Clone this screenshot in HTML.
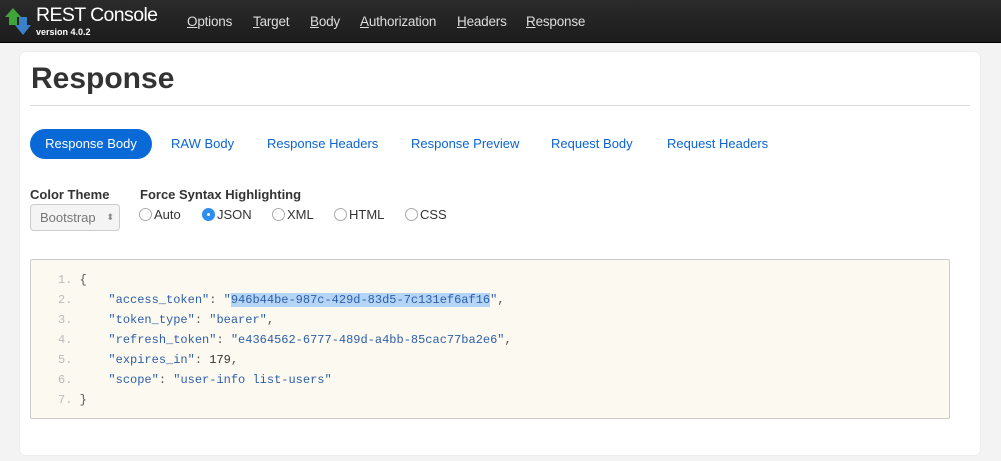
<!DOCTYPE html>
<html><head><style>
*{margin:0;padding:0;box-sizing:border-box}
body{width:1001px;height:461px;background:#f3f3f3;font-family:"Liberation Sans",sans-serif;position:relative;overflow:hidden}
.nav{position:absolute;left:0;top:0;width:1001px;height:43px;background:linear-gradient(#2b2b2b,#1c1c1c);border-bottom:1px solid #000}
.brand{position:absolute;left:36px;top:4px;color:#fff;font-size:19.5px;letter-spacing:-0.6px}
.ver{position:absolute;left:36px;top:27px;color:#fff;font-size:9px;font-weight:bold}
.nav a{position:absolute;top:14px;color:#ddd;font-size:13.5px;text-decoration:none;letter-spacing:-0.2px}
.nav a u{text-decoration:underline}
.card{position:absolute;left:20px;top:52px;width:960px;height:403px;background:#fff;border-radius:6px;box-shadow:0 0 2px rgba(0,0,0,.08)}
h1{position:absolute;left:31px;top:62px;font-size:30px;color:#333;font-weight:bold}
.hr{position:absolute;left:30px;top:105px;width:940px;height:1px;background:#ddd}
.tab{position:absolute;top:136px;font-size:13px;color:#0a64d6}
.pill{position:absolute;left:30px;top:129px;width:122px;height:30px;background:#0969d6;border-radius:15px;color:#fff;font-size:13px;text-align:center;line-height:30px}
.lbl{position:absolute;font-size:13px;font-weight:bold;color:#333}
.sel{position:absolute;left:30px;top:204px;width:90px;height:27px;border:1px solid #ccc;border-radius:4px;background:#f4f4f4;color:#777;font-size:13px;line-height:25px;padding-left:9px}
.r{position:absolute;top:207px;font-size:13px;color:#333}
.r i{display:inline-block;width:13px;height:13px;border:1px solid #aaa;border-radius:50%;vertical-align:-2px;margin-right:2px;background:#fff}
.r i.on{background:#2d8ef0;border-color:#2d8ef0;position:relative}
.r i.on:after{content:"";position:absolute;left:4px;top:4px;width:3px;height:3px;border-radius:50%;background:#fff}
.code{position:absolute;left:30px;top:259px;width:920px;height:160px;background:#fcf9f0;border:1px solid #ccc;border-radius:2px}
pre{position:absolute;left:58px;top:270px;font-family:"Liberation Mono",monospace;font-size:12px;line-height:20px;color:#555}
.n{color:#bbb}.k{color:#2e5fa8}.s{color:#2e5fa8}.d{color:#333}
.hl{background:#b5d5f7}
</style></head><body>
<div class="nav">
<svg style="position:absolute;left:4px;top:5px" width="28" height="32" viewBox="0 0 28 32"><path d="M1 12 L9 3 L17 12 L13 12 L13 20 L5 20 L5 12Z" fill="#3fa53a"/><path d="M11 20 L15 20 L15 12 L23 12 L23 20 L27 20 L19 30Z" fill="#3b7fc8"/></svg>
<div class="brand">REST Console</div><div class="ver">version 4.0.2</div>
<a style="left:187px"><u>O</u>ptions</a><a style="left:253px"><u>T</u>arget</a><a style="left:310px"><u>B</u>ody</a><a style="left:360px"><u>A</u>uthorization</a><a style="left:457px"><u>H</u>eaders</a><a style="left:526px"><u>R</u>esponse</a>
</div>
<div class="card"></div>
<h1>Response</h1><div class="hr"></div>
<div class="pill">Response Body</div>
<div class="tab" style="left:171px">RAW Body</div>
<div class="tab" style="left:267px">Response Headers</div>
<div class="tab" style="left:411px">Response Preview</div>
<div class="tab" style="left:551px">Request Body</div>
<div class="tab" style="left:667px">Request Headers</div>
<div class="lbl" style="left:30px;top:187px">Color Theme</div>
<div class="lbl" style="left:140px;top:187px">Force Syntax Highlighting</div>
<div class="sel">Bootstrap <span style="position:absolute;right:5px;top:0;font-size:9px;color:#888">⬍</span></div>
<div class="r" style="left:139px"><i></i>Auto</div>
<div class="r" style="left:202px"><i class="on"></i>JSON</div>
<div class="r" style="left:272px"><i></i>XML</div>
<div class="r" style="left:334px"><i></i>HTML</div>
<div class="r" style="left:405px"><i></i>CSS</div>
<div class="code"></div>
<pre><span class="n">1.</span> {
<span class="n">2.</span>     <span class="k">"access_token"</span>: <span class="s">"<span class="hl">946b44be-987c-429d-83d5-7c131ef6af16</span>"</span>,
<span class="n">3.</span>     <span class="k">"token_type"</span>: <span class="s">"bearer"</span>,
<span class="n">4.</span>     <span class="k">"refresh_token"</span>: <span class="s">"e4364562-6777-489d-a4bb-85cac77ba2e6"</span>,
<span class="n">5.</span>     <span class="k">"expires_in"</span>: <span class="d">179</span>,
<span class="n">6.</span>     <span class="k">"scope"</span>: <span class="s">"user-info list-users"</span>
<span class="n">7.</span> }</pre>
</body></html>
